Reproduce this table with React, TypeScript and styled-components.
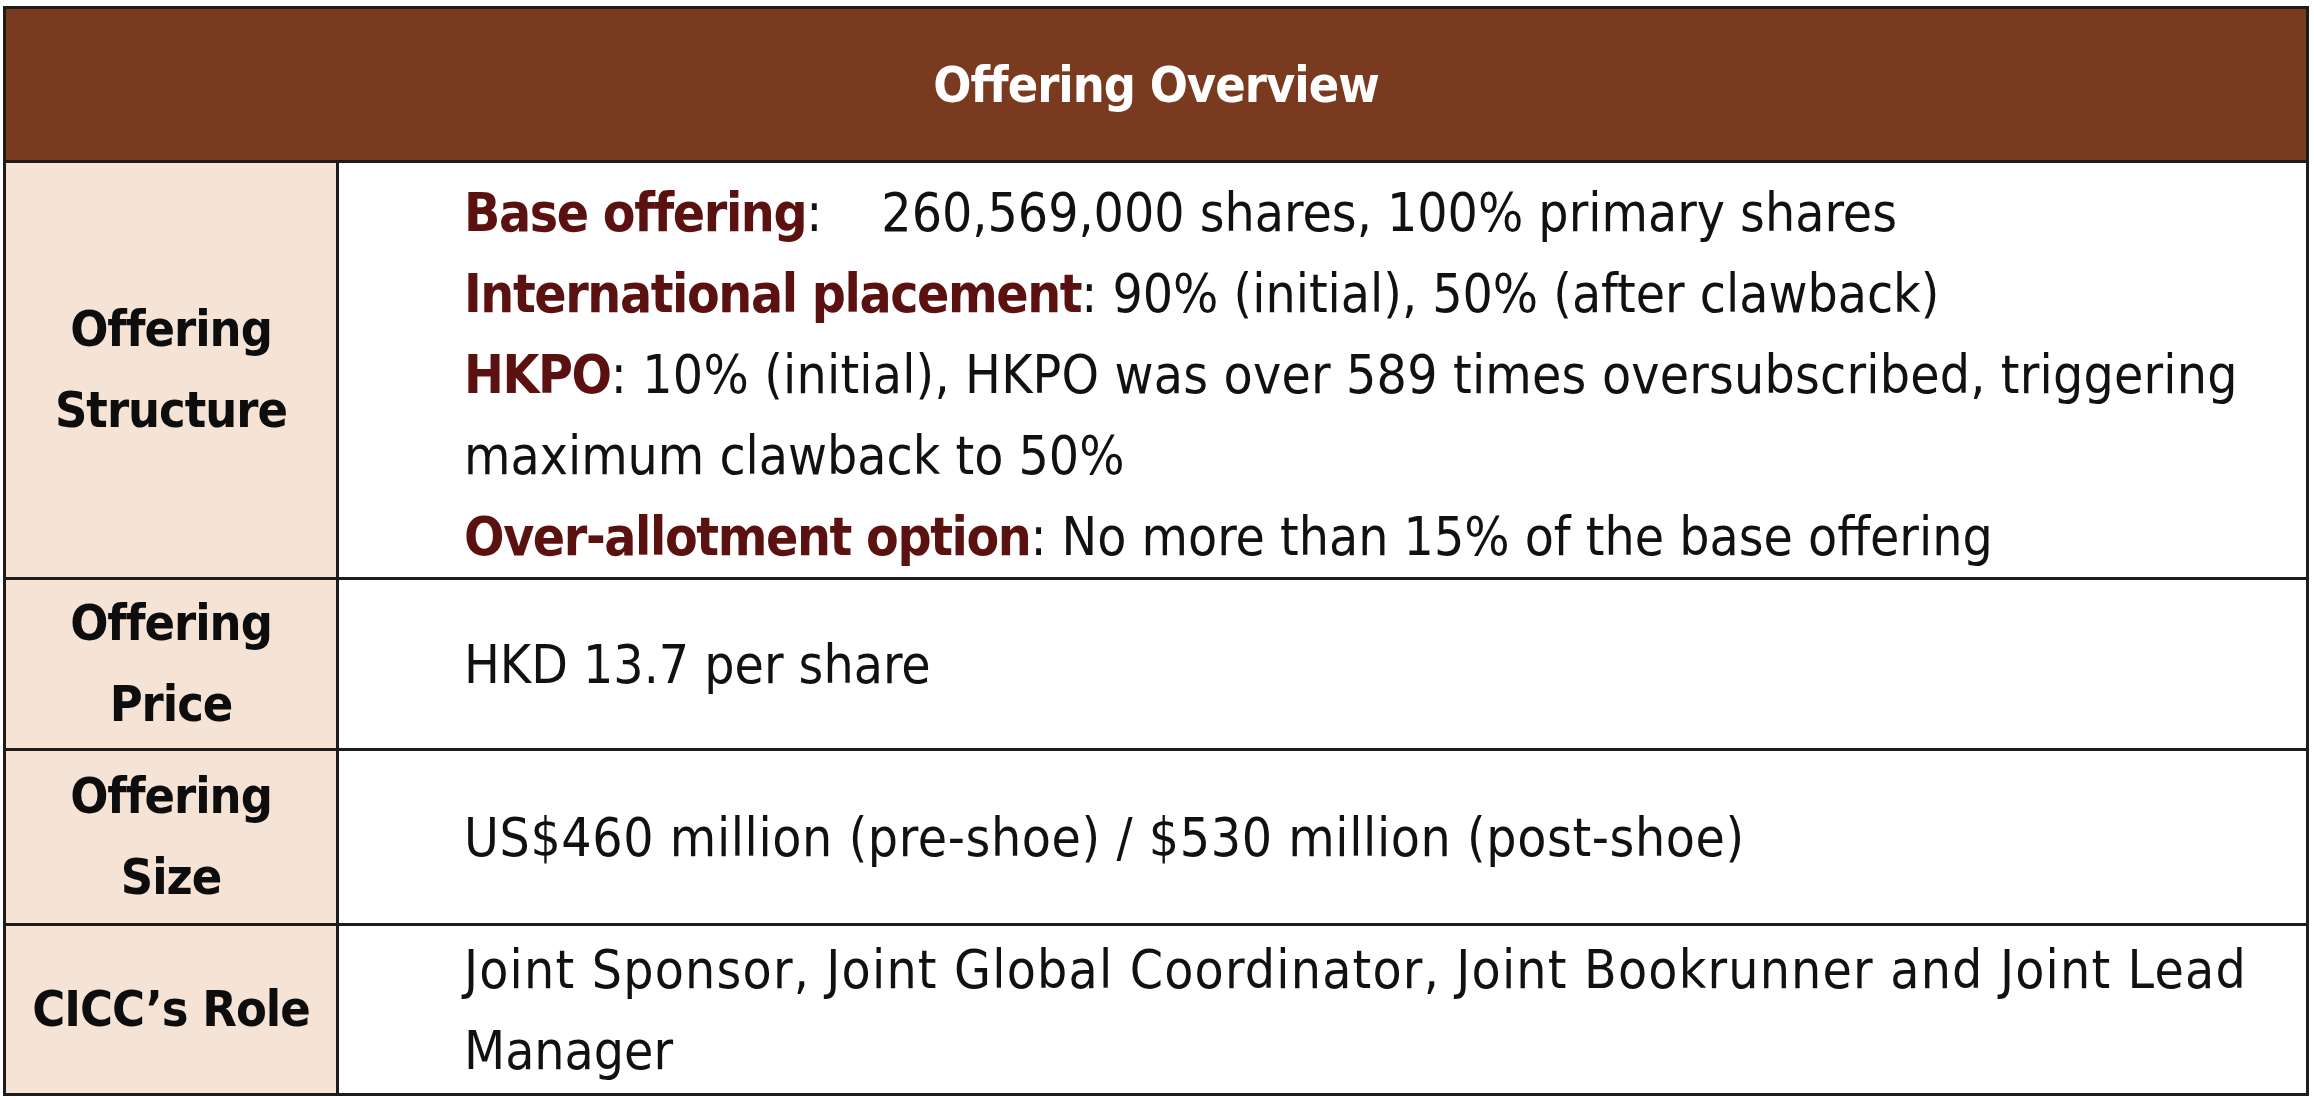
import React from "react";
import styled, { createGlobalStyle } from "styled-components";

const GlobalStyle = createGlobalStyle`
  html, body {
    margin: 0;
    padding: 0;
    background: #ffffff;
  }
  body {
    font-family: "DejaVu Sans Condensed", "DejaVu Sans", sans-serif;
    font-stretch: condensed;
    color: #111111;
  }
`;

const Page = styled.div`
  padding: 6px 0 0 3px;
`;

const Table = styled.div`
  width: 2306px;
  box-sizing: border-box;
  border: 3px solid #1c1c1c;
  display: grid;
  grid-template-columns: 333px 1fr;
`;

const Header = styled.div`
  grid-column: 1 / -1;
  height: 151px;
  background: #7a3a1f;
  color: #ffffff;
  display: flex;
  align-items: center;
  justify-content: center;
  font-size: 50px;
  font-weight: 700;
  letter-spacing: -1px;
`;

const Label = styled.div<{ $pad?: number }>`
  border-top: 3px solid #1c1c1c;
  border-right: 3px solid #1c1c1c;
  background: #f5e3d6;
  display: flex;
  align-items: center;
  justify-content: center;
  text-align: center;
  padding: ${(p) => p.$pad ?? 0}px 8px;
  font-size: 50px;
  font-weight: 700;
  letter-spacing: -1px;
  line-height: 81px;
  color: #0d0d0d;
`;

const Value = styled.div<{ $top?: number; $bottom?: number }>`
  border-top: 3px solid #1c1c1c;
  display: flex;
  flex-direction: column;
  justify-content: center;
  padding: ${(p) => p.$top ?? 3}px 40px ${(p) => p.$bottom ?? 3}px 125px;
  font-size: 53px;
  line-height: 81px;
  color: #111111;
`;

const Line = styled.div<{ $spacing?: number }>`
  white-space: nowrap;
  letter-spacing: ${(p) => p.$spacing ?? 0}px;
`;

const Term = styled.span`
  color: #5c1111;
  font-weight: 700;
  letter-spacing: -1.4px;
`;

const Spacer = styled.span`
  display: inline-block;
  width: 44px;
`;

export default function App() {
  return (
    <Page>
      <GlobalStyle />
      <Table>
        <Header>Offering Overview</Header>

        <Label>
          Offering
          <br />
          Structure
        </Label>
        <Value $top={9} $bottom={0}>
          <Line>
            <Term>Base offering</Term>:<Spacer /> 260,569,000 shares, 100% primary shares
          </Line>
          <Line>
            <Term>International placement</Term>: 90% (initial), 50% (after clawback)
          </Line>
          <Line $spacing={0.2}>
            <Term>HKPO</Term>: 10% (initial), HKPO was over 589 times oversubscribed, triggering
          </Line>
          <Line>maximum clawback to 50%</Line>
          <Line>
            <Term>Over-allotment option</Term>: No more than 15% of the base offering
          </Line>
        </Value>

        <Label $pad={3}>
          Offering
          <br />
          Price
        </Label>
        <Value>
          <Line>HKD 13.7 per share</Line>
        </Value>

        <Label $pad={5}>
          Offering
          <br />
          Size
        </Label>
        <Value>
          <Line $spacing={0.6}>US$460 million (pre-shoe) / $530 million (post-shoe)</Line>
        </Value>

        <Label>CICC’s Role</Label>
        <Value $top={3} $bottom={2}>
          <Line $spacing={1.2}>Joint Sponsor, Joint Global Coordinator, Joint Bookrunner and Joint Lead</Line>
          <Line>Manager</Line>
        </Value>
      </Table>
    </Page>
  );
}
